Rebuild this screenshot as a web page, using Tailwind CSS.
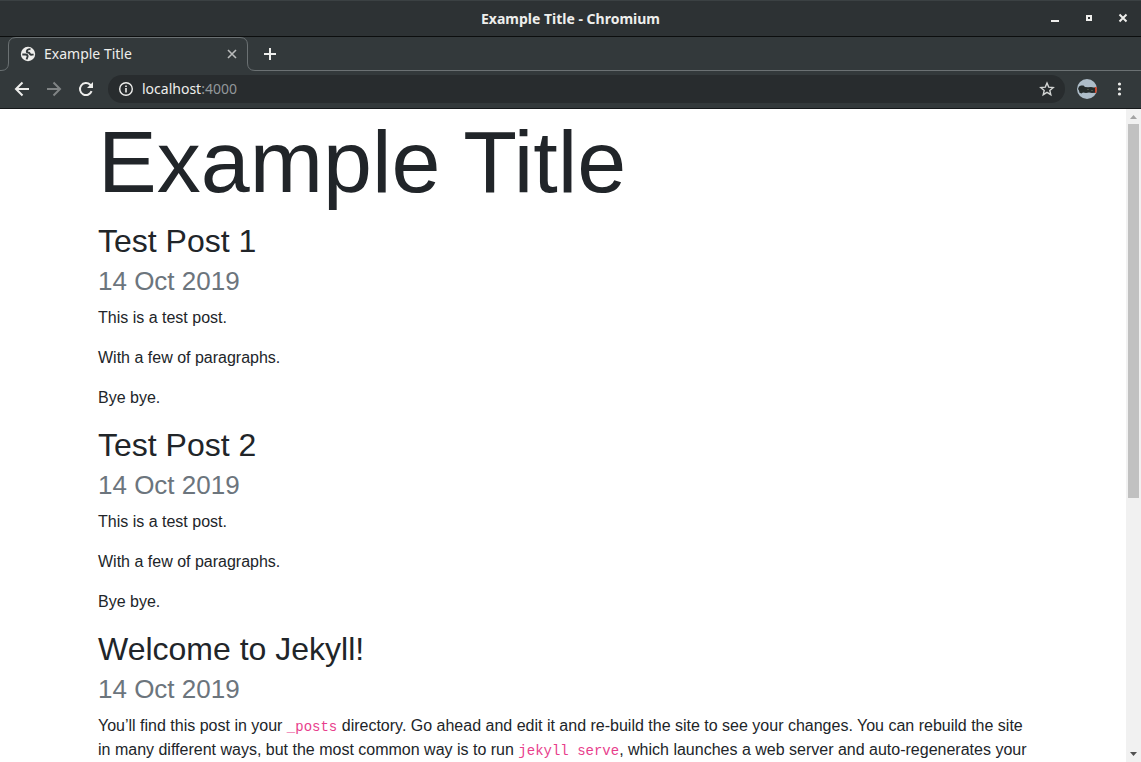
<!DOCTYPE html>
<html lang="en">
<head>
<meta charset="utf-8">
<meta name="viewport" content="width=device-width, initial-scale=1">
<title>Example Title</title>
<script src="https://cdn.jsdelivr.net/npm/@tailwindcss/browser@4"></script>
</head>
<body class="flex h-screen flex-col overflow-hidden bg-white font-['Liberation_Sans',sans-serif] text-[#212529]">
  <header class="shrink-0 border-b border-[#15181a] bg-[#33393b] font-['Noto_Sans',sans-serif] text-[#eeeeec]">
    <!-- Window title bar -->
    <div class="grid h-[37px] grid-cols-[1fr_auto_1fr] items-center border-t border-b border-t-[#3b4143] border-b-[#0c0e0e] bg-[#2d3234]">
      <span></span>
      <span class="text-sm font-bold">Example Title - Chromium</span>
      <div class="flex justify-end gap-5 pr-3">
        <button aria-label="Minimize" class="h-3.5 w-3.5"><svg viewBox="0 0 14 14" class="size-3.5" fill="#eeeeec"><path d="M4 8h8v2H4z"/></svg></button>
        <button aria-label="Maximize" class="h-3.5 w-3.5"><svg viewBox="0 0 14 14" class="size-3.5" fill="#eeeeec" fill-rule="evenodd"><path d="M5 3h6v6H5zM7 5v2h2V5z"/></svg></button>
        <button aria-label="Close" class="h-3.5 w-3.5"><svg viewBox="0 0 14 14" class="size-3.5" fill="none" stroke="#eeeeec" stroke-width="2"><path d="M4.500 2.500l7 7M11.500 2.500l-7 7"/></svg></button>
      </div>
    </div>

    <!-- Tab strip -->
    <div class="flex h-[34px]">
      <div class="relative flex w-64 items-center pr-4 pl-5">
        <svg viewBox="0 0 256 34" class="absolute inset-0 h-[34px] w-64" fill="none" stroke="#6b7173"><path d="M0 33.500h1q7.500 0 7.500-7.500V8Q8.500.5 16 .5h224q7.500 0 7.500 7.500v18q0 7.500 7.500 7.500h1"/></svg>
        <svg viewBox="0 0 16 16" class="size-4" fill="none" stroke="#33393b" stroke-width="1.900" stroke-linejoin="round"><circle cx="8" cy="8" r="7.200" fill="#eeeeec" stroke="none"/><path d="M10.500 3.200C8.500 3 7.200 3.800 6.800 5.300c-.2 1.100 1 1.400 2.200 1.500.9.200.6 1.600 1.700 1.900.9.200 1.700-.2 2.900-.1M2.300 8.500h3c1.700 0 2.300.6 2.300 1.700 0 1.200-.8 1.600-.9 3.200"/></svg>
        <span class="ml-2 flex-1 text-sm">Example Title</span>
        <button aria-label="Close tab" class="relative"><svg viewBox="0 0 16 16" class="size-4" fill="none" stroke="#b9bbbb" stroke-width="1.600"><path d="M4 4l8 8M12 4l-8 8"/></svg></button>
      </div>
      <div class="flex flex-1 items-center border-b border-[#6b7173] pl-1.5">
        <button aria-label="New tab"><svg viewBox="0 0 16 16" class="size-4" fill="#eeeeec"><path d="M7 2h2v5h5v2H9v5H7V9H2V7h5z"/></svg></button>
      </div>
    </div>

    <!-- Toolbar -->
    <div class="flex h-[37px] items-center px-3 pb-px">
      <button aria-label="Back"><svg viewBox="0 0 20 20" class="size-5" fill="none" stroke="#eeeeec" stroke-width="2"><path d="M17 10H4M10.500 3.500L4 10l6.500 6.500"/></svg></button>
      <button aria-label="Forward" class="ml-3"><svg viewBox="0 0 20 20" class="size-5" fill="none" stroke="#808485" stroke-width="2"><path d="M3 10h13M9.500 3.500L16 10l-6.500 6.500"/></svg></button>
      <button aria-label="Reload" class="ml-3"><svg viewBox="0 0 20 20" class="size-5"><path d="M15.600 12.200A6 6 0 1 1 14.200 5.800L16 7.500" fill="none" stroke="#eeeeec" stroke-width="2"/><path d="M17 3v6h-6z" fill="#eeeeec"/></svg></button>
      <div class="ml-3 flex h-7 flex-1 items-center rounded-full bg-[#282c2e] px-2.5">
        <button aria-label="View site information"><svg viewBox="0 0 16 16" class="size-4"><circle cx="8" cy="8" r="6.300" fill="none" stroke="#eeeeec" stroke-width="1.400"/><path d="M7.200 7h1.600v4.500H7.200zM7.200 4.500h1.600v1.600H7.200z" fill="#eeeeec"/></svg></button>
        <a href="#" aria-label="localhost:4000" class="ml-2 flex-1 text-sm">localhost<span class="text-[#91979a]">:4000</span></a>
        <button aria-label="Bookmark this page"><svg viewBox="0 0 16 16" class="size-4" fill="none" stroke="#d3d5d4" stroke-width="1.400"><path d="M8 2l1.700 4.100 4.500.4-3.400 2.900 1 4.300L8 11.400l-3.800 2.300 1-4.300L1.800 6.500l4.500-.4z"/></svg></button>
      </div>
      <button aria-label="Profile" class="ml-3"><svg viewBox="0 0 20 20" class="size-5 rounded-full"><path d="M0 0h20v20H0z" fill="#aebdc9"/><path d="M17.500 8H20v6h-2.500z" fill="#cf4328"/><path d="M2 7.500L4 6.500h2.500L8 8l3 .3 3-.3 4 .8v5l-3 .2-3-.6-3 .6-3-.4-1.500.9-2-.7L2 11.500 1 10z" fill="#252b2b"/><path d="M10 10h2v1h-2zM14 11h2v1h-2z" fill="#4b5547"/></svg></button>
      <button aria-label="Menu" class="ml-3"><svg viewBox="0 0 20 20" class="size-5" fill="#eeeeec"><circle cx="10.500" cy="5" r="1.600"/><circle cx="10.500" cy="10" r="1.600"/><circle cx="10.500" cy="15" r="1.600"/></svg></button>
    </div>
  </header>

  <div class="flex min-h-0 flex-1">
    <div class="min-w-0 flex-1 overflow-hidden">
      <main class="mx-auto flex max-w-[960px] flex-col gap-[15px] px-[15px]">
        <h1 class="-mb-2 text-[88px] leading-[105px]">Example Title</h1>
        <article>
          <h2 class="text-[32px] leading-10">Test Post 1</h2>
          <p class="mb-[5px] text-[26px] leading-10 text-[#6c757d]">14 Oct 2019</p>
          <div class="flex flex-col gap-4">
            <p>This is a test post.</p>
            <p>With a few of paragraphs.</p>
            <p>Bye bye.</p>
          </div>
        </article>
        <article>
          <h2 class="text-[32px] leading-10">Test Post 2</h2>
          <p class="mb-[5px] text-[26px] leading-10 text-[#6c757d]">14 Oct 2019</p>
          <div class="flex flex-col gap-4">
            <p>This is a test post.</p>
            <p>With a few of paragraphs.</p>
            <p>Bye bye.</p>
          </div>
        </article>
        <article>
          <h2 class="text-[32px] leading-10">Welcome to Jekyll!</h2>
          <p class="mb-[5px] text-[26px] leading-10 text-[#6c757d]">14 Oct 2019</p>
          <p>You’ll find this post in your <code class="font-['Liberation_Mono',monospace] text-sm leading-none text-[#e83e8c]">_posts</code> directory. Go ahead and edit it and re-build the site to see your changes. You can rebuild the site in many different ways, but the most common way is to run <code class="font-['Liberation_Mono',monospace] text-sm leading-none text-[#e83e8c]">jekyll serve</code>, which launches a web server and auto-regenerates your</p>
        </article>
      </main>
    </div>
    <!-- Scrollbar -->
    <div class="flex w-[15px] shrink-0 flex-col items-center bg-[#f1f1f1]">
      <svg viewBox="0 0 15 15" class="size-[15px]" fill="#a3a3a3"><path d="M4 10h7L7.500 6z"/></svg>
      <div class="flex w-full flex-1 flex-col px-0.5">
        <div class="w-[11px] basis-3/5 bg-[#c1c1c1]"></div>
      </div>
      <svg viewBox="0 0 15 15" class="size-[15px]" fill="#505050"><path d="M4 5h7L7.500 9z"/></svg>
    </div>
  </div>
</body>
</html>
